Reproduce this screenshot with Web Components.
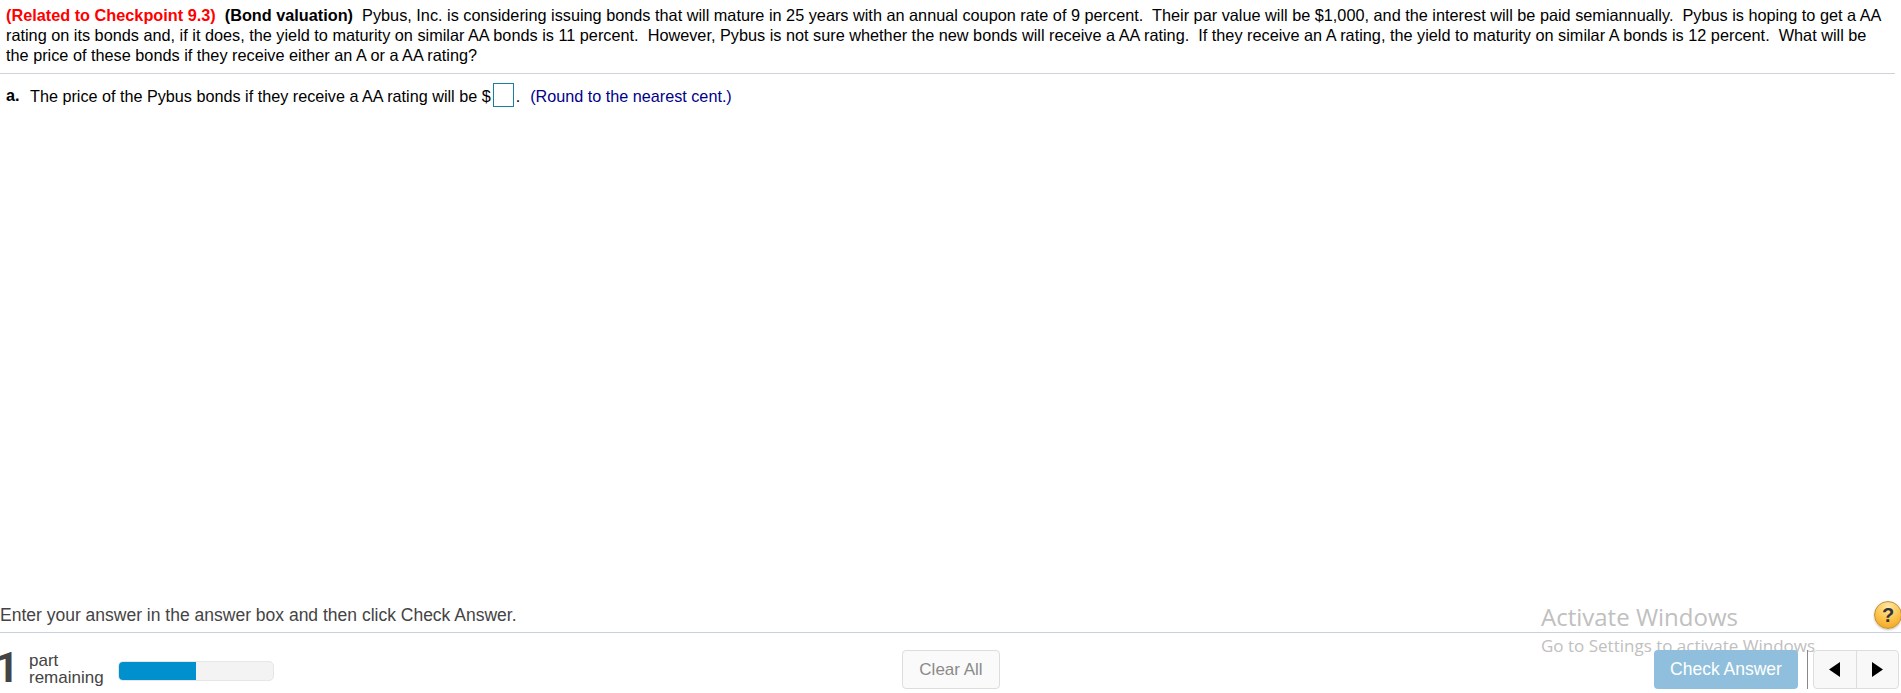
<!DOCTYPE html>
<html lang="en"><head><meta charset="utf-8"><title>Bond valuation</title>
<style>
html,body{margin:0;padding:0;background:#fff}
body{font-family:"Liberation Sans",Arial,sans-serif;height:693px;overflow:hidden}
</style></head><body>
<quiz-page>
  <question-panel></question-panel>
  <answer-footer></answer-footer>
  <activate-watermark></activate-watermark>
</quiz-page>
<script>
function def(name, html){
  customElements.define(name, class extends HTMLElement{
    constructor(){super();this.attachShadow({mode:"open"}).innerHTML=html;}
  });
}
def("quiz-page",`<style>:host{display:flex;flex-direction:column;justify-content:space-between;height:693px;position:relative;overflow:hidden}</style><slot></slot>`);
def("question-panel",`<style>
:host{display:block;color:#000;font-size:16.28px;line-height:20px}
.q{padding:5px 10px 0 6px;white-space:pre-wrap}
.tag{color:#f00;font-weight:bold}
b{font-weight:bold}
hr{border:0;height:1px;background:#cdd3d9;margin:8px 6px 0 0}
.a{padding:9px 0 0 6px;display:flex;align-items:center;white-space:pre;font-size:16.2px}
.a b{width:24px;flex:none}
.box{box-sizing:border-box;width:21px;height:24px;border:1px solid #1a7f9c;margin:0 2px 0 2px;flex:none}
.hint{color:#00008b;margin-left:10px}
.a span:not(.box){position:relative;top:1px}
</style>
<div class="q"><span class="tag">(Related to Checkpoint 9.3)</span>  <b>(Bond valuation)</b>  Pybus, Inc. is considering issuing bonds that will mature in 25 years with an annual coupon rate of 9 percent.  Their par value will be $1,000, and the interest will be paid semiannually.  Pybus is hoping to get a AA rating on its bonds and, if it does, the yield to maturity on similar AA bonds is 11 percent.  However, Pybus is not sure whether the new bonds will receive a AA rating.  If they receive an A rating, the yield to maturity on similar A bonds is 12 percent.  What will be the price of these bonds if they receive either an A or a AA rating?</div>
<hr>
<div class="a"><b>a.</b><span>The price of the Pybus bonds if they receive a AA rating will be $</span><span class="box"></span><span>.</span><span class="hint">(Round to the nearest cent.)</span></div>`);
def("answer-footer",`<style>
:host{display:block;color:#444;position:relative;z-index:1}
.ins{font-size:17.5px;line-height:20px;height:32px;box-sizing:border-box;padding-bottom:3px;display:flex;justify-content:space-between;align-items:center}
.help{box-sizing:border-box;width:28px;height:28px;align-self:flex-start;margin:1px -1px 0 0;border-radius:50%;background:radial-gradient(circle at 50% 20%,#ffe9a8,#fbc044 55%,#ef9d1c);border:1px solid #bd9040;box-shadow:0 1px 2px rgba(120,90,30,.35);color:#333;font-weight:bold;font-size:20px;line-height:26px;text-align:center;flex:none}
.row{border-top:1px solid #c5d3e0;height:60px;display:flex;align-items:flex-start}
.n{font-family:Roboto,"Liberation Sans",sans-serif;font-weight:700;font-size:42px;line-height:42px;color:#444;margin:14px 0 0 -5px;width:34px;flex:none}
.p{font-size:17px;line-height:17px;margin-top:19px;color:#444;width:89px;flex:none}
.bar{margin-top:28px;box-sizing:border-box;width:156px;height:20px;border-radius:5px;background:#f3f3f3;border:1px solid #e6e6e6;overflow:hidden;flex:none}
.fill{width:78px;height:20px;margin:-1px;background:#0090cd}
button{font:inherit;cursor:pointer}
.clear{margin:17px 0 0 628px;box-sizing:border-box;width:98px;height:39px;border:1px solid #ddd;border-radius:4px;background:#fafafa;color:#8a8a8a;font-size:17px;padding:0;flex:none}
.right{margin:17px 2px 0 auto;display:flex;align-items:flex-start}
.check{box-sizing:border-box;width:144px;height:39px;border:0;border-radius:4px;background:#8fbfdc;color:#fff;font-size:17.5px;padding:0}
.sep{width:1px;height:39px;background:#888;margin:0 5px 0 9px}
.nav{display:flex;box-sizing:border-box;width:86px;height:39px;border:1px solid #ddd;border-radius:4px;background:#f8f8f8}
.nav span{flex:1;display:flex;align-items:center;justify-content:center}
.nav span+span{border-left:1px solid #ddd}
</style>
<div class="ins"><span>Enter your answer in the answer box and then click Check Answer.</span><span class="help">?</span></div>
<div class="row">
<span class="n">1</span><span class="p">part<br>remaining</span>
<div class="bar"><div class="fill"></div></div>
<button class="clear">Clear All</button>
<div class="right"><button class="check">Check Answer</button><span class="sep"></span>
<div class="nav"><span><svg width="11" height="15" viewBox="0 0 11 15"><path d="M11 0V15L0 7.5Z" fill="#000"/></svg></span><span><svg width="11" height="15" viewBox="0 0 11 15"><path d="M0 0V15L11 7.5Z" fill="#000"/></svg></span></div></div>
</div>`);
def("activate-watermark",`<style>
:host{position:absolute;left:1541px;top:600px;font-family:"Open Sans",sans-serif;color:#c0c0c0;pointer-events:none;white-space:nowrap}
.t{font-size:24px;line-height:33px}
.s{font-size:17px;line-height:22px;margin-top:2px}
</style><div class="t">Activate Windows</div><div class="s">Go to Settings to activate Windows.</div>`);
</script>
</body></html>
